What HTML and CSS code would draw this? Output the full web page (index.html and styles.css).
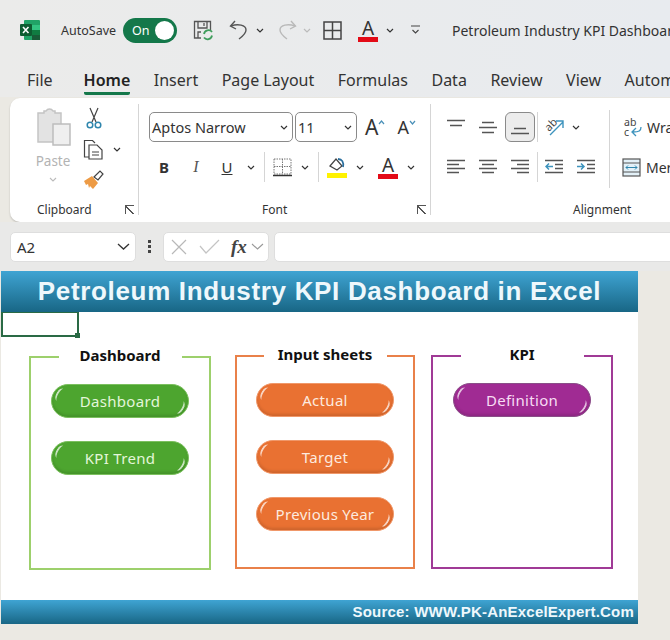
FILE: index.html
```html
<!DOCTYPE html>
<html lang="en">
<head>
    <meta charset="UTF-8">
    <meta name="viewport" content="width=device-width, initial-scale=1.0">
    <title>Petroleum Industry KPI Dashboard</title>
    <link rel="stylesheet" href="styles.css">
</head>
<body>
    <div class="app">
        <!-- Title bar -->
        <header class="titlebar">
            <svg class="logo" width="20" height="20" viewBox="0 0 20 20">
                <rect x="4" y="0" width="16" height="20" rx="1" fill="#21a366"/>
                <rect x="12" y="5" width="8" height="5" fill="#33c481"/>
                <rect x="12" y="10" width="8" height="5" fill="#107c41"/>
                <rect x="12" y="15" width="8" height="5" fill="#185c37"/>
                <rect x="0" y="4" width="12" height="12" rx="1" fill="#0e5c30"/>
                <path d="M3 7l5.500 6M8.500 7L3 13" stroke="#fff" stroke-width="1.600" fill="none"/>
            </svg>
            <span class="autosave">AutoSave</span>
            <span class="toggle">On<i class="knob"></i></span>
            <svg class="qa-save" width="21" height="21" viewBox="0 0 21 21" fill="none" stroke="#555" stroke-width="1.300">
                <path d="M8 18H1.500V1.500h16V10"/>
                <path d="M5 2v6h9V2M11 3v3"/>
                <path d="M5 18v-6h3"/>
                <path d="M11 14a4.500 4.500 0 0 1 8-2M19 15.500a4.500 4.500 0 0 1-8 2" stroke="#3f9d5c" stroke-width="1.800"/>
            </svg>
            <svg class="qa-undo" width="19" height="20" viewBox="0 0 19 20" fill="none" stroke="#555" stroke-width="1.400">
                <path d="M6 1L1.500 6 7 9"/>
                <path d="M2 6c7-2.500 15-1 15 4 0 3-3 6-7 9"/>
            </svg>
            <svg class="chev qa-undo-more" width="8" height="5" viewBox="0 0 8 5"><path d="M1 1l3 3 3-3" fill="none" stroke="#333" stroke-width="1.200"/></svg>
            <svg class="qa-redo" width="19" height="20" viewBox="0 0 19 20" fill="none" stroke="#b9b9b9" stroke-width="1.400">
                <path d="M13 1l4.500 5L12 9"/>
                <path d="M17 6C10 3.500 2 5 2 10c0 3 3 6 7 9"/>
            </svg>
            <svg class="chev qa-redo-more" width="8" height="5" viewBox="0 0 8 5"><path d="M1 1l3 3 3-3" fill="none" stroke="#bbb" stroke-width="1.200"/></svg>
            <svg class="qa-grid" width="19" height="19" viewBox="0 0 19 19" fill="none" stroke="#444" stroke-width="1.500">
                <rect x="1" y="1" width="17" height="17"/>
                <path d="M9.500 1v17M1 9.500h17"/>
            </svg>
            <span class="font-color qa-color">A</span>
            <svg class="chev qa-color-more" width="8" height="5" viewBox="0 0 8 5"><path d="M1 1l3 3 3-3" fill="none" stroke="#333" stroke-width="1.200"/></svg>
            <svg class="qa-custom" width="11" height="10" viewBox="0 0 11 10" fill="none" stroke="#444" stroke-width="1.100">
                <path d="M1 1h9M2.500 5l3 3 3-3"/>
            </svg>
            <span class="doc-title">Petroleum Industry KPI Dashboard</span>
        </header>

        <!-- Ribbon tabs -->
        <nav class="tabs">
            <span>File</span>
            <span class="active">Home</span>
            <span>Insert</span>
            <span>Page Layout</span>
            <span>Formulas</span>
            <span>Data</span>
            <span>Review</span>
            <span>View</span>
            <span>Automate</span>
        </nav>

        <!-- Ribbon -->
        <section class="ribbon">
            <div class="group clipboard">
                <div class="clip-tools">
                    <div class="paste">
                        <svg width="35" height="39" viewBox="0 0 35 39">
                            <path d="M2 5h6V3h2a4 4 0 0 1 7 0h2v2h6v29H2z" fill="#e3e3e3" stroke="#c4c4c4" stroke-width="1.500"/>
                            <rect x="17" y="16" width="17" height="21" fill="#efefef" stroke="#bdbdbd" stroke-width="1.500"/>
                        </svg>
                        <span>Paste</span>
                        <svg class="chev" width="8" height="5" viewBox="0 0 8 5"><path d="M1 1l3 3 3-3" fill="none" stroke="#bbb" stroke-width="1.100"/></svg>
                    </div>
                    <div class="clip-small">
                        <svg width="16" height="22" viewBox="0 0 16 22" fill="none" stroke-width="1.200">
                            <path d="M4 1l6 14M12 1L6 15" stroke="#444"/>
                            <circle cx="4" cy="18" r="2.800" stroke="#2f86ad" stroke-width="1.500"/>
                            <circle cx="12" cy="18" r="2.800" stroke="#2f86ad" stroke-width="1.500"/>
                        </svg>
                        <div class="copy-row">
                            <svg width="21" height="21" viewBox="0 0 21 21" fill="none" stroke="#444" stroke-width="1.200">
                                <path d="M6 18H1.500V1.500h8L12 4"/>
                                <path d="M6 6h8l5 5v9H6z" fill="#fff"/>
                                <path d="M9 13h7M9 16h7"/>
                            </svg>
                            <svg class="chev" width="8" height="5" viewBox="0 0 8 5"><path d="M1 1l3 3 3-3" fill="none" stroke="#333" stroke-width="1.200"/></svg>
                        </div>
                        <svg width="21" height="20" viewBox="0 0 21 20">
                            <path d="M1 11l8-5 6 7-5 6-3-3-1 2-1-4-2 1z" fill="#ed9b45"/>
                            <path d="M11 7l6-6 3 3-5 6z" fill="#fff" stroke="#444" stroke-width="1.200"/>
                        </svg>
                    </div>
                </div>
                <div class="group-label"><span>Clipboard</span><i class="launcher"></i></div>
            </div>

            <div class="group font-group">
                <div class="row first">
                    <div class="select font-name">Aptos Narrow<svg class="chev" width="8" height="5" viewBox="0 0 8 5"><path d="M1 1l3 3 3-3" fill="none" stroke="#333" stroke-width="1.200"/></svg></div>
                    <div class="select font-size">11<svg class="chev" width="8" height="5" viewBox="0 0 8 5"><path d="M1 1l3 3 3-3" fill="none" stroke="#333" stroke-width="1.200"/></svg></div>
                    <span class="grow-a">A<svg width="7" height="5" viewBox="0 0 7 5"><path d="M1 4l2.500-3L6 4" fill="none" stroke="#4a90b8" stroke-width="1.200"/></svg></span>
                    <span class="shrink-a">A<svg width="7" height="5" viewBox="0 0 7 5"><path d="M1 1l2.500 3L6 1" fill="none" stroke="#4a90b8" stroke-width="1.200"/></svg></span>
                </div>
                <div class="row second">
                    <b class="fmt">B</b>
                    <i class="fmt italic">I</i>
                    <u class="fmt">U</u>
                    <svg class="chev after-u" width="8" height="5" viewBox="0 0 8 5"><path d="M1 1l3 3 3-3" fill="none" stroke="#333" stroke-width="1.200"/></svg>
                    <span class="sep"></span>
                    <svg width="19" height="19" viewBox="0 0 19 19" fill="none" stroke="#777" stroke-width="1" stroke-dasharray="1.500 1">
                        <rect x="1" y="1" width="17" height="15"/>
                        <path d="M9.500 1v15M1 8.500h17"/>
                        <path d="M0 17.500h19" stroke="#333" stroke-width="1.600" stroke-dasharray="none"/>
                    </svg>
                    <svg class="chev" width="8" height="5" viewBox="0 0 8 5"><path d="M1 1l3 3 3-3" fill="none" stroke="#333" stroke-width="1.200"/></svg>
                    <span class="sep"></span>
                    <svg width="20" height="21" viewBox="0 0 20 21">
                        <path d="M3 9l6-7 6 7-5 4z" fill="#fff" stroke="#444" stroke-width="1.200"/>
                        <path d="M11 2c4 0 6 3 5 8" fill="none" stroke="#2a6f9e" stroke-width="1.800"/>
                        <rect x="0" y="16" width="20" height="5" fill="#fff200"/>
                    </svg>
                    <svg class="chev" width="8" height="5" viewBox="0 0 8 5"><path d="M1 1l3 3 3-3" fill="none" stroke="#333" stroke-width="1.200"/></svg>
                    <span class="font-color">A</span>
                    <svg class="chev" width="8" height="5" viewBox="0 0 8 5"><path d="M1 1l3 3 3-3" fill="none" stroke="#333" stroke-width="1.200"/></svg>
                </div>
                <div class="group-label"><span>Font</span><i class="launcher"></i></div>
            </div>

            <div class="group align-group">
                <div class="align-body">
                    <div class="align-rows">
                        <div class="row first">
                            <svg class="lines" viewBox="0 0 18 16"><path d="M0 1.500h18M3 6.500h12"/></svg>
                            <svg class="lines" viewBox="0 0 18 16"><path d="M3 3.500h12M0 8.500h18M3 13.500h12"/></svg>
                            <span class="pressed"><svg class="lines" viewBox="0 0 18 16"><path d="M3 9.500h12M0 14.500h18"/></svg></span>
                            <span class="sep"></span>
                            <svg class="orient" width="20" height="20" viewBox="0 0 20 20" fill="none">
                                <text x="1" y="12" transform="rotate(-45 6 10)">ab</text>
                                <path d="M5 18L18 5M11 4h7v7" stroke="#3d93bd" stroke-width="1.400"/>
                            </svg>
                            <svg class="chev" width="8" height="5" viewBox="0 0 8 5"><path d="M1 1l3 3 3-3" fill="none" stroke="#333" stroke-width="1.200"/></svg>
                        </div>
                        <div class="row second">
                            <svg class="lines" viewBox="0 0 18 16"><path d="M0 1.500h18M0 5.500h12M0 9.500h18M0 13.500h12"/></svg>
                            <svg class="lines" viewBox="0 0 18 16"><path d="M0 1.500h18M3 5.500h12M0 9.500h18M3 13.500h12"/></svg>
                            <svg class="lines" viewBox="0 0 18 16"><path d="M0 1.500h18M6 5.500h12M0 9.500h18M6 13.500h12"/></svg>
                            <span class="sep"></span>
                            <svg class="lines indent" viewBox="0 0 18 16"><path d="M0 1.500h18M10 5.500h8M10 9.500h8M0 13.500h18"/><path class="arrow" d="M8 7.500H1M4 4.500l-3 3 3 3"/></svg>
                            <svg class="lines indent" viewBox="0 0 18 16"><path d="M0 1.500h18M10 5.500h8M10 9.500h8M0 13.500h18"/><path class="arrow" d="M0 7.500h7M4 4.500l3 3-3 3"/></svg>
                        </div>
                    </div>
                    <div class="wide-col">
                        <span class="wide-btn"><span class="wrap-icon"><span class="wrap-letters">ab<br>c</span><svg width="11" height="11" viewBox="0 0 11 11" fill="none"><path d="M10 1c0 4-2 5-8 5M5 2L1 6l4 4" stroke="#3d93bd" stroke-width="1.300"/></svg></span>Wrap Text</span>
                        <span class="wide-btn merge"><svg width="19" height="19" viewBox="0 0 19 19" fill="none">
                            <rect x="1" y="1" width="17" height="17" fill="#e3f1f8" stroke="#555" stroke-width="1.200"/>
                            <path d="M1 5h17M1 14h17" stroke="#555"/>
                            <path d="M4 9.500h11M6 7.500l-2 2 2 2M13 7.500l2 2-2 2" stroke="#2f86ad"/>
                        </svg>Merge &amp; Center</span>
                    </div>
                </div>
                <div class="group-label"><span>Alignment</span></div>
            </div>
        </section>

        <!-- Formula bar -->
        <div class="formula-bar">
            <div class="name-box">A2<svg width="13" height="7" viewBox="0 0 13 7"><path d="M1 1l5.500 5L12 1" fill="none" stroke="#333" stroke-width="1.300"/></svg></div>
            <div class="dots"><i></i><i></i><i></i></div>
            <div class="fx-box">
                <svg width="16" height="16" viewBox="0 0 16 16"><path d="M1 1l14 14M15 1L1 15" stroke="#b8b8b8" stroke-width="1.200"/></svg>
                <svg width="21" height="15" viewBox="0 0 21 15"><path d="M1 7l6 7L20 1" fill="none" stroke="#c4c4c4" stroke-width="1.200"/></svg>
                <em>fx</em>
                <svg width="13" height="7" viewBox="0 0 13 7"><path d="M1 1l5.500 5L12 1" fill="none" stroke="#999" stroke-width="1.100"/></svg>
            </div>
            <div class="formula-input"></div>
        </div>

        <!-- Worksheet -->
        <main class="sheet">
            <h1 class="banner">Petroleum Industry KPI Dashboard in Excel</h1>
            <div class="cell-row"><div class="selected-cell"></div></div>
            <div class="panels">
                <fieldset class="panel green">
                    <legend>Dashboard</legend>
                    <a class="pill">Dashboard</a>
                    <a class="pill">KPI Trend</a>
                </fieldset>
                <fieldset class="panel orange">
                    <legend>Input sheets</legend>
                    <a class="pill">Actual</a>
                    <a class="pill">Target</a>
                    <a class="pill">Previous Year</a>
                </fieldset>
                <fieldset class="panel purple">
                    <legend>KPI</legend>
                    <a class="pill">Definition</a>
                </fieldset>
            </div>
            <footer class="source">Source: WWW.PK-AnExcelExpert.Com</footer>
        </main>
    </div>
</body>
</html>
```

FILE: styles.css
```css
/* General page */
body {
    margin: 0;
    width: 670px;
    height: 640px;
    overflow: hidden;
    background: #ebe9e3;
    font-family: "Noto Sans", "Open Sans", Arial, sans-serif;
    color: #333;
}

.app {
    width: 670px;
    height: 640px;
    overflow: hidden;
}

.chev {
    flex: none;
}

/* Title bar */
.titlebar {
    height: 60px;
    display: flex;
    align-items: center;
    white-space: nowrap;
    background: linear-gradient(90deg, #ebebea, #e8ebef);
}

.titlebar > * {
    flex: none;
}

.logo {
    margin-left: 20px;
}

.autosave {
    width: 54px;
    margin-left: 21px;
    font-size: 12.5px;
    color: #333;
}

.toggle {
    display: flex;
    align-items: center;
    justify-content: space-between;
    box-sizing: border-box;
    width: 54px;
    height: 25px;
    margin-left: 8px;
    padding: 0 3px 0 9px;
    border-radius: 13px;
    background: #14784a;
    color: #fff;
    font-size: 12.5px;
}

.knob {
    width: 19px;
    height: 19px;
    border-radius: 50%;
    background: #fff;
}

.qa-save { margin-left: 16px; }
.qa-undo { margin-left: 15px; }
.qa-undo-more { margin-left: 8px; }
.qa-redo { margin-left: 14px; }
.qa-redo-more { margin-left: 6px; }
.qa-grid { margin-left: 12px; }
.qa-color { margin-left: 16px; }
.qa-color-more { margin-left: 8px; }
.qa-custom { margin-left: 16px; }

.doc-title {
    margin-left: 31px;
    font-size: 14px;
}

/* Letter with a colour bar under it */
.font-color {
    flex: none;
    box-sizing: border-box;
    width: 20px;
    height: 23px;
    border-bottom: 5px solid #e30b17;
    text-align: center;
    font-size: 19px;
    line-height: 19px;
    color: #333;
}

/* Ribbon tabs */
.tabs {
    height: 37px;
    display: flex;
    gap: 23.5px;
    padding-left: 27px;
    white-space: nowrap;
    font-size: 16px;
    line-height: 40px;
    background: linear-gradient(90deg, #ebebea, #e8ebef);
}

.tabs .active {
    height: 32px;
    margin-left: 7.5px;
    font-weight: 600;
    color: #222;
    border-bottom: 3px solid #14784a;
    border-radius: 0 0 2px 2px;
}

/* Ribbon */
.ribbon {
    display: flex;
    height: 124px;
    margin: 1px 0 0 10px;
    border-radius: 10px 0 0 10px;
    background: #fff;
    box-shadow: 0 1px 2px rgba(0, 0, 0, 0.2);
    overflow: hidden;
}

.group {
    flex: none;
    display: flex;
    flex-direction: column;
    box-sizing: border-box;
    height: 111px;
    margin-top: 6px;
    border-right: 1px solid #d5d5d5;
}

.clipboard { width: 129px; }
.font-group { width: 292px; padding-left: 10px; }
.align-group { width: 342px; padding-left: 16px; border-right: none; }

.group-label {
    display: flex;
    margin: auto 0 -3px;
    height: 18px;
    align-items: center;
    font-size: 12px;
    color: #333;
}

.clipboard .group-label { padding: 0 4px 0 27px; }
.font-group .group-label { padding: 0 4px 0 113px; }
.align-group .group-label { padding-left: 126px; }

.launcher {
    width: 8px;
    height: 8px;
    margin-left: auto;
    border: solid #555;
    border-width: 1px 0 0 1px;
    background: linear-gradient(45deg, transparent 40%, #555 40%, #555 52%, transparent 52%);
}

/* Clipboard group */
.clip-tools {
    display: flex;
}

.paste {
    display: flex;
    flex-direction: column;
    align-items: center;
    width: 36px;
    margin-left: 25px;
    padding-top: 4px;
    font-size: 13.5px;
    color: #b3b3b3;
}

.paste span {
    margin-top: 4px;
    line-height: 20px;
}

.paste .chev {
    margin-top: 6px;
}

.clip-small {
    display: flex;
    flex-direction: column;
    align-items: flex-start;
    gap: 10px;
    margin-left: 12px;
    padding-top: 3px;
}

.clip-small > svg:first-child {
    margin-left: 3px;
}

.copy-row {
    display: flex;
    align-items: center;
    gap: 9px;
}

/* Rows of ribbon buttons */
.row {
    display: flex;
    align-items: center;
    white-space: nowrap;
}

.row.first {
    height: 30px;
    margin-top: 8px;
}

.row.second {
    height: 28px;
    margin-top: 11px;
}

.sep {
    flex: none;
    width: 1px;
    height: 30px;
    background: #d5d5d5;
}

/* Font group */
.select {
    display: flex;
    align-items: center;
    justify-content: space-between;
    box-sizing: border-box;
    height: 30px;
    padding: 0 4px 0 2px;
    border: 1px solid #8a8a8a;
    border-radius: 5px;
    font-size: 14.5px;
    color: #333;
}

.font-name { width: 144px; }
.font-size { width: 62px; margin-left: 2px; }

.grow-a,
.shrink-a {
    display: flex;
    font-size: 21px;
    line-height: 24px;
}

.grow-a { margin-left: 8px; }
.shrink-a { margin-left: 12px; font-size: 18px; }

.grow-a svg,
.shrink-a svg {
    margin-top: 5px;
}

.fmt {
    width: 14px;
    margin-left: 8px;
    text-align: center;
    font-size: 15px;
    color: #333;
}

.fmt.italic {
    margin-left: 18px;
    font-family: "Liberation Serif", serif;
    font-size: 16px;
    color: #555;
}

.fmt + u {
    margin-left: 17px;
}

.font-group .second .chev { margin-left: 9px; }
.font-group .second .chev.after-u { margin-left: 13px; }
.font-group .second .sep { margin: 0 8px 0 9px; }
.font-group .second .font-color { margin-left: 14px; }

/* Alignment group */
.align-body {
    display: flex;
}

.align-rows {
    width: 162px;
}

.lines {
    flex: none;
    width: 18px;
    height: 16px;
    margin-right: 14px;
    fill: none;
    stroke: #555;
    stroke-width: 1.5;
}

.lines .arrow {
    stroke: #3d93bd;
}

.pressed {
    display: flex;
    align-items: center;
    justify-content: center;
    box-sizing: border-box;
    width: 30px;
    height: 30px;
    margin-left: -6px;
    border: 1px solid #8a8a8a;
    border-radius: 6px;
    background: #ececec;
}

.pressed .lines {
    margin: 0;
}

.align-rows .sep {
    margin: 0 7px 0 2px;
}

.align-rows .second .sep {
    margin-left: -6px;
}

.align-rows .first .chev {
    margin-left: 7px;
}

.orient {
    flex: none;
    overflow: visible;
}

.orient text {
    font-size: 11px;
    fill: #444;
}

.wide-col {
    display: flex;
    flex-direction: column;
    gap: 20px;
    box-sizing: border-box;
    width: 160px;
    height: 78px;
    margin-top: 6px;
    padding: 7px 0 0 14px;
    border-left: 1px solid #d5d5d5;
}

.wide-btn {
    display: flex;
    align-items: center;
    gap: 5px;
    height: 20px;
    white-space: nowrap;
    font-size: 14px;
    color: #333;
}

.wrap-icon {
    display: flex;
    align-items: flex-end;
    width: 18px;
    height: 20px;
}

.wrap-letters {
    width: 12px;
    font-size: 10.5px;
    line-height: 10px;
    color: #444;
}

.wrap-icon svg {
    flex: none;
    margin-left: -5px;
}

.wide-btn.merge {
    margin-left: -2px;
}

/* Formula bar */
.formula-bar {
    display: flex;
    align-items: center;
    height: 49px;
    padding-left: 10px;
    background: #e9e9e8;
}

.name-box,
.fx-box,
.formula-input {
    flex: none;
    box-sizing: border-box;
    height: 30px;
    border: 1px solid #dedede;
    border-radius: 5px;
    background: #fff;
}

.name-box {
    display: flex;
    align-items: center;
    justify-content: space-between;
    width: 126px;
    padding: 0 5px 0 6px;
    font-size: 15px;
}

.dots {
    flex: none;
    display: flex;
    flex-direction: column;
    gap: 2px;
    width: 27px;
    align-items: center;
}

.dots i {
    width: 3px;
    height: 3px;
    background: #444;
}

.fx-box {
    display: flex;
    align-items: center;
    width: 106px;
    padding-left: 7px;
}

.fx-box svg:nth-child(2) {
    margin-left: 12px;
}

.fx-box em {
    margin-left: 11px;
    font-family: "Liberation Serif", serif;
    font-size: 19px;
    font-weight: bold;
    color: #444;
}

.fx-box svg:last-child {
    margin-left: 4px;
}

.formula-input {
    width: 420px;
    margin-left: 5px;
}

/* Worksheet */
.sheet {
    width: 637px;
    height: 353px;
    margin-left: 1px;
    background: #fff;
    font-family: "Liberation Sans", Arial, sans-serif;
}

.banner {
    height: 41px;
    margin: 0;
    text-align: center;
    font-size: 26px;
    line-height: 40px;
    letter-spacing: 0.67px;
    color: #eef8fc;
    background: linear-gradient(#3fa4d3, #186685);
}

.cell-row {
    height: 25px;
}

.selected-cell {
    position: relative;
    box-sizing: border-box;
    width: 78px;
    height: 25px;
    border: 2px solid #2a6a45;
    border-top-width: 1px;
}

.selected-cell::after {
    content: "";
    position: absolute;
    right: -3px;
    bottom: -3px;
    width: 5px;
    height: 5px;
    background: #2a6a45;
}

/* KPI navigation panels */
.panels {
    display: flex;
    height: 263px;
    padding: 7px 0 0 28px;
    box-sizing: border-box;
}

.panel {
    box-sizing: border-box;
    height: 225px;
    margin: 0;
    padding: 0;
    display: flex;
    flex-direction: column;
    align-items: center;
    gap: 23px;
    border: 2px solid;
    border-radius: 0;
}

.panel legend {
    box-sizing: border-box;
    width: 123px;
    margin: 0 auto;
    padding: 0 0 4px;
    text-align: center;
    font-family: "Noto Sans", sans-serif;
    font-size: 15px;
    font-weight: 700;
    line-height: 20px;
    color: #111;
}

.panel .pill:first-of-type {
    margin-top: 15px;
}

.panel.green {
    width: 182px;
    margin-top: 1px;
    border-color: #9dd06c;
}

.panel.orange {
    width: 180px;
    margin-left: 24px;
    border-color: #e9814a;
}

.panel.purple {
    width: 182px;
    margin-left: 16px;
    border-color: #a03a96;
}

.pill {
    position: relative;
    flex: none;
    box-sizing: border-box;
    width: 138px;
    height: 34px;
    border-radius: 17px;
    text-align: center;
    font-family: "Noto Sans", sans-serif;
    font-size: 15px;
    line-height: 33px;
    letter-spacing: 0.3px;
    box-shadow: inset 0 -2px 3px rgba(0, 0, 0, 0.12);
}

/* Glossy crescents at the two ends of a pill */
.pill::before,
.pill::after {
    content: "";
    position: absolute;
    box-sizing: border-box;
    width: 9px;
    height: 14px;
    border-left: 2px solid rgba(255, 255, 255, 0.7);
    border-radius: 50%;
}

.pill::before {
    left: 4px;
    top: 3px;
    transform: rotate(30deg);
}

.pill::after {
    right: 4px;
    bottom: 3px;
    transform: rotate(210deg);
}

.green .pill {
    background: #4da52f;
    border: 1px solid #7cc05f;
    color: #e4f6da;
}

.orange .pill {
    background: #e97132;
    border: 1px solid #f0986a;
    color: #fdeadf;
}

.purple .pill {
    background: #a02b93;
    border: 1px solid #8a4e88;
    color: #f7dcf3;
}

.source {
    height: 24px;
    box-sizing: border-box;
    padding-right: 4px;
    text-align: right;
    font-size: 15px;
    font-weight: bold;
    line-height: 24px;
    letter-spacing: 0.2px;
    color: #eef8fc;
    background: linear-gradient(#3fa4d3, #186685);
}
```
